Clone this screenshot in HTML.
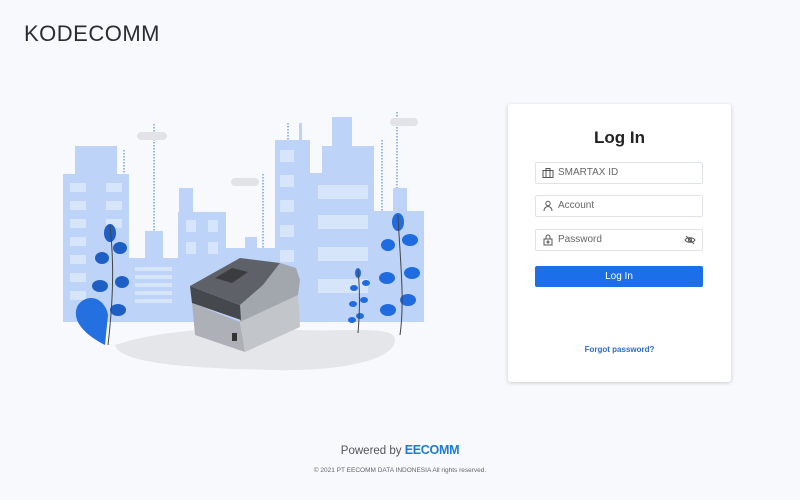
<!DOCTYPE html>
<html><head><style>
body{margin:0;width:800px;height:500px;background:#f7f9fd;font-family:"Liberation Sans",sans-serif;position:relative;overflow:hidden}
.logo{position:absolute;left:24px;top:21px;font-size:22px;letter-spacing:0.5px;color:#2a2d33}
.card{position:absolute;left:508px;top:104px;width:223px;height:278px;background:#fff;border-radius:3px;box-shadow:0 1px 4px rgba(0,0,0,.18)}
.card h1{margin:0;position:absolute;top:24px;width:100%;text-align:center;font-size:17px;font-weight:bold;color:#222}
.in{position:absolute;left:27px;width:166px;height:20px;border:1px solid #dfe2e7;border-radius:2px;font-size:10px;color:#666;line-height:20px}
.in span{position:absolute;left:22px}
.in svg{position:absolute;left:6px;top:4px}
.btn{position:absolute;left:27px;top:162px;width:168px;height:21px;background:#1c6fe8;border-radius:2px;color:#fff;font-size:10px;text-align:center;line-height:21px}
.fp{position:absolute;top:241px;width:100%;text-align:center;font-size:8px;font-weight:bold;color:#2d6bd0}
.pw{position:absolute;top:443px;width:800px;text-align:center;font-size:11.5px;color:#555}
.pw b{color:#1d7bd1;font-size:12.5px;letter-spacing:-0.3px}
.cr{position:absolute;top:467px;width:800px;text-align:center;font-size:6.5px;color:#666}
</style></head><body>
<div class="logo">KODECOMM</div>
<svg width="800" height="500" style="position:absolute;left:0;top:0">
<g fill="#bdd3f7">
<rect x="75" y="146" width="42" height="30"/><rect x="63" y="174" width="66" height="148"/>
<rect x="129" y="258" width="49" height="64"/><rect x="145" y="231" width="18" height="30"/>
<rect x="179" y="188" width="14" height="30"/><rect x="178" y="212" width="48" height="110"/>
<rect x="226" y="248" width="49" height="74"/><rect x="245" y="237" width="12" height="14"/>
<rect x="299" y="123" width="3" height="20"/><rect x="275" y="140" width="35" height="182"/>
<rect x="310" y="173" width="15" height="149"/><rect x="332" y="117" width="20" height="30"/><rect x="322" y="146" width="52" height="176"/>
<rect x="374" y="211" width="50" height="111"/><rect x="393" y="188" width="14" height="25"/>
</g>
<g fill="#d7e5fb">
<rect x="70" y="183" width="16" height="9"/><rect x="106" y="183" width="16" height="9"/>
<rect x="70" y="201" width="16" height="9"/><rect x="106" y="201" width="16" height="9"/>
<rect x="70" y="219" width="16" height="9"/><rect x="106" y="219" width="16" height="9"/>
<rect x="70" y="237" width="16" height="9"/><rect x="70" y="255" width="16" height="9"/><rect x="70" y="273" width="16" height="9"/><rect x="70" y="291" width="16" height="9"/>
<rect x="135" y="267" width="37" height="4"/><rect x="135" y="275" width="37" height="4"/><rect x="135" y="283" width="37" height="4"/><rect x="135" y="291" width="37" height="4"/><rect x="135" y="299" width="37" height="4"/>
<rect x="186" y="220" width="10" height="12"/><rect x="208" y="220" width="10" height="12"/><rect x="186" y="242" width="10" height="12"/><rect x="208" y="242" width="10" height="12"/>
<rect x="280" y="150" width="14" height="12"/><rect x="280" y="175" width="14" height="12"/><rect x="280" y="200" width="14" height="12"/><rect x="280" y="225" width="14" height="12"/><rect x="280" y="250" width="14" height="12"/>
<rect x="318" y="185" width="50" height="14"/><rect x="318" y="215" width="50" height="14"/><rect x="318" y="247" width="50" height="14"/><rect x="318" y="279" width="50" height="14"/>
</g>
<g stroke="#3a78d6" stroke-width="1" stroke-dasharray="1.5 1.5">
<line x1="154" y1="124" x2="154" y2="231"/><line x1="124" y1="150" x2="124" y2="174"/><line x1="263" y1="174" x2="263" y2="248"/>
<line x1="288" y1="123" x2="288" y2="140"/><line x1="382" y1="140" x2="382" y2="211"/><line x1="397" y1="112" x2="397" y2="188"/>
</g>
<g fill="#e2e3e7"><rect x="137" y="132" width="30" height="8" rx="4"/><rect x="231" y="178" width="28" height="8" rx="4"/><rect x="390" y="118" width="28" height="8" rx="4"/></g>
<path d="M115 345 C160 330 230 325 300 330 C350 332 395 325 395 340 C395 360 340 372 270 370 C200 368 120 365 115 345Z" fill="#e4e6ea"/>
<g fill="#1d5fc4"><path d="M105 345 C85 335 70 320 78 305 C88 292 105 298 108 315Z" fill="#2470e0"/>
<ellipse cx="110" cy="233" rx="6" ry="9"/><ellipse cx="120" cy="248" rx="7" ry="6"/><ellipse cx="102" cy="258" rx="7" ry="6"/><ellipse cx="122" cy="282" rx="7" ry="6"/><ellipse cx="100" cy="286" rx="8" ry="6"/><ellipse cx="118" cy="310" rx="8" ry="6"/></g>
<path d="M108 345 C112 310 115 270 110 225" stroke="#444" fill="none" stroke-width="1"/>
<g fill="#1f6be0"><ellipse cx="398" cy="222" rx="6" ry="9"/><ellipse cx="410" cy="240" rx="8" ry="6"/><ellipse cx="388" cy="245" rx="7" ry="6"/><ellipse cx="412" cy="273" rx="8" ry="6"/><ellipse cx="387" cy="278" rx="8" ry="6"/><ellipse cx="408" cy="300" rx="8" ry="6"/><ellipse cx="388" cy="310" rx="8" ry="6"/>
<ellipse cx="358" cy="273" rx="3" ry="5"/><ellipse cx="366" cy="283" rx="4" ry="3"/><ellipse cx="354" cy="288" rx="4" ry="3"/><ellipse cx="364" cy="300" rx="4" ry="3"/><ellipse cx="353" cy="304" rx="4" ry="3"/><ellipse cx="360" cy="316" rx="4" ry="3"/><ellipse cx="352" cy="320" rx="4" ry="3"/></g>
<path d="M400 335 C405 300 400 260 398 215" stroke="#444" fill="none" stroke-width="1"/>
<path d="M358 333 C360 310 360 290 358 270" stroke="#444" fill="none" stroke-width="1"/>
<polygon points="192,303 240,322 245,352 195,335" fill="#adb1b7"/>
<polygon points="240,322 298,295 300,327 245,352" fill="#c2c6cb"/>
<polygon points="263,285 280,263 296,268 300,280 298,295 240,322 240,305" fill="#a2a7ad"/>
<polygon points="190,286 240,305 241,320 192,303" fill="#45484d"/>
<polygon points="190,286 240,258 280,263 263,285 240,305" fill="#5e6268"/>
<polygon points="215,278 232,268 248,272 232,283" fill="#3a3c40"/>
<rect x="232" y="333" width="5" height="8" fill="#333"/>
</svg>
<div class="card">
<h1>Log In</h1>
<div class="in" style="top:58px"><svg width="12" height="12" viewBox="0 0 12 12" fill="none" stroke="#555" stroke-width="1"><rect x="1" y="3.5" width="10" height="7"/><path d="M4 3.5V1.5h4v2M4 3.5v7M8 3.5v7"/></svg><span>SMARTAX ID</span></div>
<div class="in" style="top:91px"><svg width="12" height="12" viewBox="0 0 12 12" fill="none" stroke="#555" stroke-width="1"><circle cx="6" cy="3.5" r="2.2"/><path d="M2 11c0-3 2-4.5 4-4.5s4 1.5 4 4.5"/></svg><span>Account</span></div>
<div class="in" style="top:125px"><svg width="12" height="12" viewBox="0 0 12 12" fill="none" stroke="#555" stroke-width="1"><rect x="2" y="5" width="8" height="6"/><path d="M4 5V3a2 2 0 0 1 4 0v2"/><circle cx="6" cy="8" r="1"/></svg><span>Password</span><svg style="left:148px" width="12" height="12" viewBox="0 0 12 12" fill="none" stroke="#555" stroke-width="1"><path d="M1 6c2-3 8-3 10 0c-2 3-8 3-10 0z"/><circle cx="6" cy="6" r="1.5"/><path d="M2 2l8 8"/></svg></div>
<div class="btn">Log In</div>
<div class="fp">Forgot password?</div>
</div>
<div class="pw">Powered by <b>EECOMM</b></div>
<div class="cr">© 2021 PT EECOMM DATA INDONESIA All rights reserved.</div>
</body></html>
